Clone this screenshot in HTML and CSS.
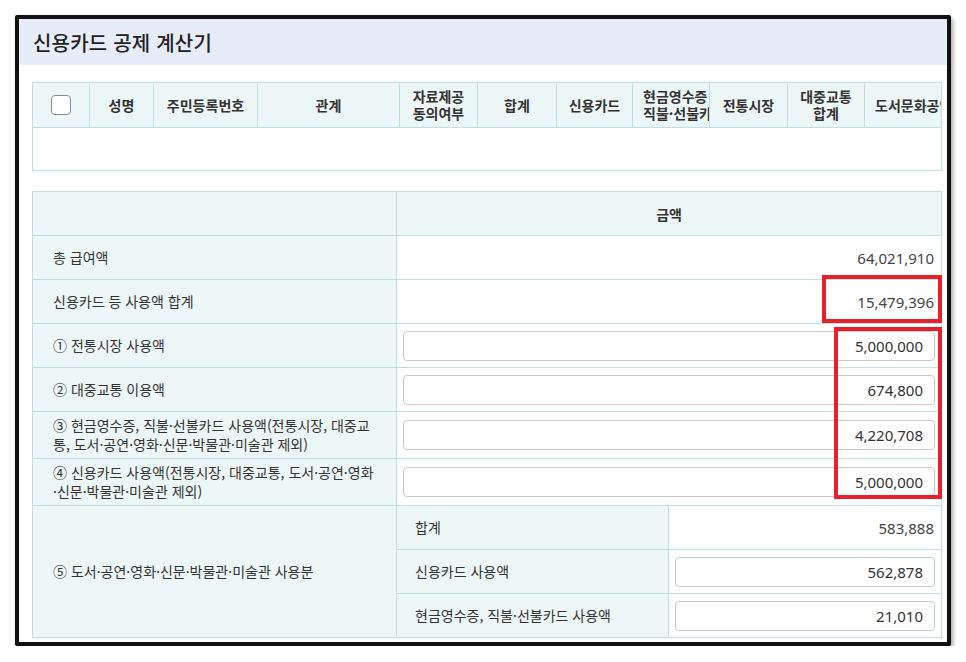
FILE: index.html
```html
<!DOCTYPE html>
<html lang="ko">
<head>
    <meta charset="UTF-8">
    <meta name="viewport" content="width=device-width, initial-scale=1.0">
    <title>신용카드 공제 계산기</title>
    <link rel="stylesheet" href="styles.css">
</head>
<body>
    <div class="frame">
        <div class="title-bar">
            <h1>신용카드 공제 계산기</h1>
        </div>

        <div class="content">
            <!-- 부양가족 목록 -->
            <div class="list-wrap">
                <table class="list">
                    <colgroup>
                        <col style="width:57px"><col style="width:64px"><col style="width:104px">
                        <col style="width:142px"><col style="width:78px"><col style="width:79px">
                        <col style="width:76px"><col style="width:77px"><col style="width:78px">
                        <col style="width:77px"><col style="width:110px">
                    </colgroup>
                    <thead>
                        <tr>
                            <th><span class="check"></span></th>
                            <th>성명</th>
                            <th>주민등록번호</th>
                            <th>관계</th>
                            <th class="two">자료제공<br>동의여부</th>
                            <th>합계</th>
                            <th>신용카드</th>
                            <th class="two clip">현금영수증<br>직불·선불카드</th>
                            <th>전통시장</th>
                            <th class="two">대중교통<br>합계</th>
                            <th class="clip">도서문화공연</th>
                        </tr>
                    </thead>
                    <tbody>
                        <tr class="empty"><td colspan="11"></td></tr>
                    </tbody>
                </table>
            </div>

            <!-- 공제 금액 -->
            <table class="calc">
                <colgroup>
                    <col style="width:364px"><col style="width:272px"><col style="width:273px">
                </colgroup>
                <tr class="head">
                    <th class="label"></th>
                    <th colspan="2">금액</th>
                </tr>
                <tr>
                    <td class="label">총 급여액</td>
                    <td colspan="2" class="num">64,021,910</td>
                </tr>
                <tr>
                    <td class="label">신용카드 등 사용액 합계</td>
                    <td colspan="2" class="num">15,479,396</td>
                </tr>
                <tr>
                    <td class="label">① 전통시장 사용액</td>
                    <td colspan="2" class="field"><input type="text" value="5,000,000"></td>
                </tr>
                <tr>
                    <td class="label">② 대중교통 이용액</td>
                    <td colspan="2" class="field"><input type="text" value="674,800"></td>
                </tr>
                <tr class="tall">
                    <td class="label">③ 현금영수증, 직불·선불카드 사용액(전통시장, 대중교통, 도서·공연·영화·신문·박물관·미술관 제외)</td>
                    <td colspan="2" class="field"><input type="text" value="4,220,708"></td>
                </tr>
                <tr class="tall">
                    <td class="label">④ 신용카드 사용액(전통시장, 대중교통, 도서·공연·영화·신문·박물관·미술관 제외)</td>
                    <td colspan="2" class="field"><input type="text" value="5,000,000"></td>
                </tr>
                <tr>
                    <td class="label" rowspan="3">⑤ 도서·공연·영화·신문·박물관·미술관 사용분</td>
                    <td class="label sub">합계</td>
                    <td class="num">583,888</td>
                </tr>
                <tr>
                    <td class="label sub">신용카드 사용액</td>
                    <td class="field"><input type="text" value="562,878"></td>
                </tr>
                <tr>
                    <td class="label sub">현금영수증, 직불·선불카드 사용액</td>
                    <td class="field"><input type="text" value="21,010"></td>
                </tr>
            </table>
        </div>

        <!-- 강조 표시 -->
        <div class="mark mark-total"></div>
        <div class="mark mark-inputs"></div>
    </div>
</body>
</html>
```

FILE: styles.css
```css
body {
    margin: 0;
    background: #ffffff;
    font-family: "Noto Sans CJK KR", "Noto Sans", sans-serif;
    color: #333333;
}

.frame {
    position: relative;
    width: 928px;
    height: 623px;
    margin: 15px 0 0 15px;
    border: 4px solid #111111;
    border-radius: 2px;
    background: #ffffff;
    box-shadow: 2px 3px 4px rgba(0, 0, 0, 0.35);
    overflow: hidden;
}

.title-bar {
    height: 46px;
    background: #e6edf8;
    display: flex;
    align-items: center;
    padding-left: 14px;
}

.title-bar h1 {
    margin: 0;
    font-size: 20px;
    font-weight: 500;
    color: #222222;
    letter-spacing: 0.2px;
}

.content {
    padding: 17px 6px 0 13px;
}

/* 목록 테이블 */
.list-wrap {
    width: 909px;
    overflow: hidden;
    border-right: 1px solid #bfe0e3;
}

.list {
    table-layout: fixed;
    width: 942px;
    border-collapse: collapse;
}

.list th {
    height: 44px;
    padding: 0 10px;
    background: #eef7f7;
    border: 1px solid #bfe0e3;
    font-size: 14px;
    font-weight: 700;
    line-height: 16px;
    color: #333333;
    text-align: center;
    white-space: nowrap;
    overflow: hidden;
}

.list th.two {
    line-height: 17px;
}

.list th.clip {
    text-align: left;
    padding-right: 0;
}

.list .empty td {
    height: 40px;
    border: 1px solid #bfe0e3;
    border-top: none;
}

.check {
    display: inline-block;
    width: 18px;
    height: 18px;
    border: 1px solid #8a8a8a;
    border-radius: 4px;
    background: #ffffff;
    vertical-align: middle;
}

/* 금액 테이블 */
.calc {
    table-layout: fixed;
    width: 909px;
    margin-top: 20px;
    border-collapse: collapse;
}

.calc th,
.calc td {
    height: 43px;
    border: 1px solid #bfe0e3;
    font-size: 14px;
    color: #333333;
    padding: 0;
}

.calc .head th {
    background: #eef7f7;
    font-weight: 700;
    text-align: center;
}

.calc .label {
    background: #eef7f7;
    padding: 0 20px;
    line-height: 19px;
    text-align: left;
    font-weight: 400;
}

.calc .label.sub {
    padding: 0 18px;
}

.calc .tall td {
    height: 46px;
}

.calc .num {
    text-align: right;
    padding-right: 7px;
    font-family: "Noto Sans", "Noto Sans CJK KR", sans-serif;
    font-size: 15px;
    color: #444444;
}

.calc .field {
    padding: 0 6px;
}

.calc input {
    display: block;
    box-sizing: border-box;
    width: 100%;
    height: 30px;
    padding: 0 11px;
    border: 1px solid #c9c9c9;
    border-radius: 4px;
    background: #ffffff;
    font-family: "Noto Sans", "Noto Sans CJK KR", sans-serif;
    font-size: 15px;
    color: #333333;
    text-align: right;
}

/* 빨간 강조 테두리 */
.mark {
    position: absolute;
    border: 4px solid #e8202a;
    box-sizing: border-box;
}

.mark-total {
    left: 803px;
    top: 256px;
    width: 120px;
    height: 48px;
}

.mark-inputs {
    left: 815px;
    top: 308px;
    width: 108px;
    height: 172px;
}
```
